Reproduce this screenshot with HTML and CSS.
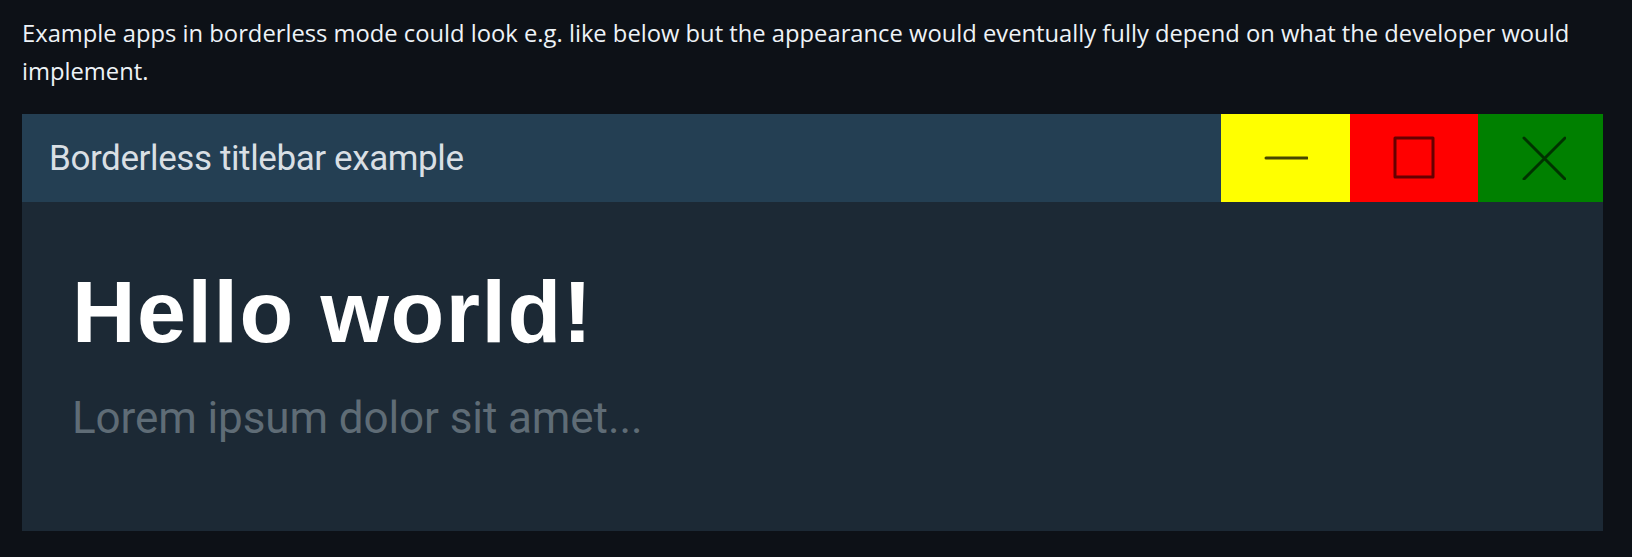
FILE: index.html
```html
<!DOCTYPE html>
<html lang="en">
<head>
<meta charset="utf-8">
<title>Borderless mode</title>
<link rel="stylesheet" href="styles.css">
</head>
<body>
<article class="markdown">
  <p class="intro">Example apps in borderless mode could look e.g. like below but the appearance would eventually fully depend on what the developer would implement.</p>
  <div class="shot">
    <div class="titlebar">
      <span class="title">Borderless titlebar example</span>
      <div class="controls">
        <div class="btn btn-min">
          <svg width="44" height="44" viewBox="0 0 44 44"><line x1="2" y1="22" x2="43" y2="22" stroke="rgba(0,0,0,0.72)" stroke-width="3" stroke-linecap="round"/></svg>
        </div>
        <div class="btn btn-max">
          <svg width="44" height="44" viewBox="0 0 44 44"><rect x="3" y="2" width="38" height="39" fill="none" stroke="rgba(0,0,0,0.6)" stroke-width="3" stroke-linejoin="round"/></svg>
        </div>
        <div class="btn btn-close">
          <svg width="44" height="44" viewBox="0 0 44 44"><path d="M2 2 L43 43 M43 2 L2 43" stroke="rgba(0,0,0,0.6)" stroke-width="3" stroke-linecap="round"/></svg>
        </div>
      </div>
    </div>
    <div class="content">
      <h1 class="hello">Hello world!</h1>
      <p class="lorem">Lorem ipsum dolor sit amet...</p>
    </div>
  </div>
</article>
</body>
</html>
```
FILE: styles.css
```css
html, body {
  margin: 0;
  padding: 0;
  background: #0d1117;
}
.markdown {
  padding: 14px 0 0 22px;
  font-family: "Open Sans", "Noto Sans", sans-serif;
  color: #eef3f7;
}
.intro {
  margin: 0 0 24px 0;
  max-width: 1588px;
  font-size: 23.75px;
  line-height: 38px;
}
.shot {
  width: 1581px;
  height: 417px;
  background: #1c2935;
  overflow: hidden;
  display: flex;
  flex-direction: column;
}
.titlebar {
  height: 88px;
  flex: none;
  background: #243f53;
  display: flex;
  align-items: center;
  justify-content: space-between;
}
.title {
  padding-left: 27px;
  font-family: Roboto, sans-serif;
  font-size: 35px;
  letter-spacing: -0.4px;
  color: #d9dfe4;
}
.controls {
  display: flex;
  height: 100%;
}
.btn {
  height: 100%;
  display: flex;
  align-items: center;
  justify-content: center;
}
.btn-min { width: 129px; background: #ffff00; }
.btn-max { width: 128px; background: #ff0000; }
.btn-close { width: 125px; background: #008000; padding-left: 7px; box-sizing: border-box; }
.content {
  padding: 0 50px;
}
.hello {
  margin: 66px 0 0 0;
  font-family: "Liberation Sans", Arial, sans-serif;
  font-weight: bold;
  font-size: 88px;
  line-height: 88px;
  letter-spacing: 1.5px;
  color: #ffffff;
}
.lorem {
  margin: 40px 0 0 0;
  font-family: Roboto, sans-serif;
  font-size: 44px;
  line-height: 44px;
  letter-spacing: -0.1px;
  color: #5f6c76;
}
```
